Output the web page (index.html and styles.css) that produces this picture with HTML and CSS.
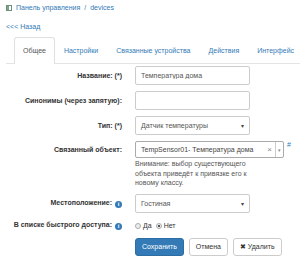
FILE: index.html
```html
<!DOCTYPE html>
<html lang="ru">
<head>
    <meta charset="UTF-8">
    <title>devices</title>
    <link rel="stylesheet" href="styles.css">
</head>
<body>
    <div class="page">
        <div class="crumbs">
            <svg class="crumb-icon" width="6" height="6" viewBox="0 0 6 6">
                <rect x="0.5" y="0.5" width="5" height="5" fill="#fff" stroke="#6a8f7a"/>
                <rect x="1" y="1" width="2" height="4" fill="#7fa08a"/>
            </svg>
            <a href="#">Панель управления</a> / <a href="#">devices</a>
        </div>
        <a href="#" class="back">&lt;&lt;&lt; Назад</a>

        <ul class="tabs">
            <li class="active"><a href="#">Общее</a></li>
            <li><a href="#">Настройки</a></li>
            <li><a href="#">Связанные устройства</a></li>
            <li><a href="#">Действия</a></li>
            <li><a href="#">Интерфейс</a></li>
        </ul>

        <form class="form">
            <div class="row">
                <label>Название: (*)</label>
                <div class="field"><input class="input" type="text" value="Температура дома"></div>
            </div>
            <div class="row">
                <label>Синонимы (через запятую):</label>
                <div class="field"><input class="input" type="text" value=""></div>
            </div>
            <div class="row">
                <label>Тип: (*)</label>
                <div class="field">
                    <div class="select"><span>Датчик температуры</span><span class="caret">▾</span></div>
                </div>
            </div>
            <div class="row row-top">
                <label>Связанный объект:</label>
                <div class="field">
                    <div class="linked">
                        <div class="combo">
                            <span class="combo-text">TempSensor01- Температура дома</span>
                            <span class="combo-clear">×</span>
                            <span class="combo-arrow">▾</span>
                        </div>
                        <a href="#" class="hash">#</a>
                    </div>
                    <p class="help">Внимание: выбор существующего объекта приведёт к привязке его к новому классу.</p>
                </div>
            </div>
            <div class="row">
                <label>Местоположение: <span class="info">i</span></label>
                <div class="field">
                    <div class="select"><span>Гостиная</span><span class="caret">▾</span></div>
                </div>
            </div>
            <div class="row row-radio">
                <label>В списке быстрого доступа: <span class="info">i</span></label>
                <div class="field radios">
                    <span class="radio"><span class="dot"></span>Да</span>
                    <span class="radio"><span class="dot on"></span>Нет</span>
                </div>
            </div>
            <div class="row row-buttons">
                <span></span>
                <div class="field buttons">
                    <button type="submit" class="btn btn-primary">Сохранить</button>
                    <button type="button" class="btn">Отмена</button>
                    <button type="button" class="btn"><span class="x">✖</span> Удалить</button>
                </div>
            </div>
        </form>
    </div>
</body>
</html>
```

FILE: styles.css
```css
body {
    margin: 0;
    font-family: "Liberation Sans", Arial, sans-serif;
    font-size: 7px;
    color: #333;
    background: #fff;
}
a {
    color: #337ab7;
    text-decoration: none;
}
.page {
    padding: 3px 0 0 6px;
}
.crumbs {
    display: flex;
    align-items: center;
    gap: 2px;
    height: 9px;
    color: #337ab7;
    white-space: pre;
}
.crumb-icon {
    margin-right: 2px;
}
.back {
    display: block;
    margin-top: 10px;
    line-height: 9px;
}
.tabs {
    display: flex;
    list-style: none;
    margin: 6px 0 0;
    padding: 0 0 0 8px;
    border-bottom: 1px solid #e4e4e4;
    white-space: nowrap;
}
.tabs li {
    margin-bottom: -1px;
}
.tabs a {
    display: block;
    padding: 0 8px;
    line-height: 25px;
    border: 1px solid transparent;
    border-bottom: none;
    border-radius: 3px 3px 0 0;
}
.tabs .active a {
    color: #555;
    background: #fff;
    border-color: #e0e0e0;
    height: 26px;
}
.form {
    padding-top: 2px;
}
.row {
    display: grid;
    grid-template-columns: 116px 1fr;
    column-gap: 13px;
    align-items: center;
    margin-bottom: 6px;
}
.row label {
    text-align: right;
    font-weight: bold;
    white-space: nowrap;
}
.row-top {
    align-items: start;
}
.row-top label {
    line-height: 17px;
}
.input,
.select {
    box-sizing: border-box;
    width: 115px;
    height: 19px;
    padding: 0 5px;
    border: 1px solid #ccc;
    border-radius: 2px;
    font: inherit;
    color: #555;
    background: #fff;
}
.select {
    display: flex;
    align-items: center;
    justify-content: space-between;
}
.caret {
    font-size: 6px;
    color: #444;
}
.linked {
    display: flex;
    align-items: flex-start;
    gap: 3px;
}
.combo {
    box-sizing: border-box;
    display: flex;
    align-items: center;
    width: 149px;
    height: 17px;
    padding-left: 5px;
    border: 1px solid #aaa;
    border-radius: 2px;
    color: #444;
}
.combo-text {
    flex: 1;
    white-space: nowrap;
}
.combo-clear {
    color: #888;
    padding: 0 3px;
    font-size: 8px;
}
.combo-arrow {
    align-self: stretch;
    display: flex;
    align-items: center;
    padding: 0 2px;
    border-left: 1px solid #ccc;
    font-size: 5px;
    color: #888;
}
.hash {
    font-size: 7px;
}
.help {
    margin: 1px 0 0;
    width: 120px;
    line-height: 9.5px;
    color: #555;
}
.info {
    display: inline-block;
    width: 7px;
    height: 7px;
    border-radius: 50%;
    background: #337ab7;
    color: #fff;
    font-size: 6px;
    line-height: 7px;
    text-align: center;
    vertical-align: -1px;
    margin-left: 1px;
}
.row-radio {
    margin-bottom: 5px;
}
.radios {
    display: flex;
    gap: 4px;
    line-height: 14px;
}
.radio {
    display: flex;
    align-items: center;
    gap: 2px;
}
.dot {
    box-sizing: border-box;
    width: 6px;
    height: 6px;
    border-radius: 50%;
    border: 1px solid #aaa;
    background: #eee;
}
.dot.on {
    background: radial-gradient(#555 35%, #eee 45%);
}
.buttons {
    display: flex;
    gap: 5px;
}
.btn {
    height: 18px;
    padding: 0 6px;
    border: 1px solid #ccc;
    border-radius: 3px;
    background: #fff;
    color: #333;
    font: inherit;
}
.btn-primary {
    background: #337ab7;
    border-color: #2e6da4;
    color: #fff;
}
.x {
    font-size: 7px;
}
```
